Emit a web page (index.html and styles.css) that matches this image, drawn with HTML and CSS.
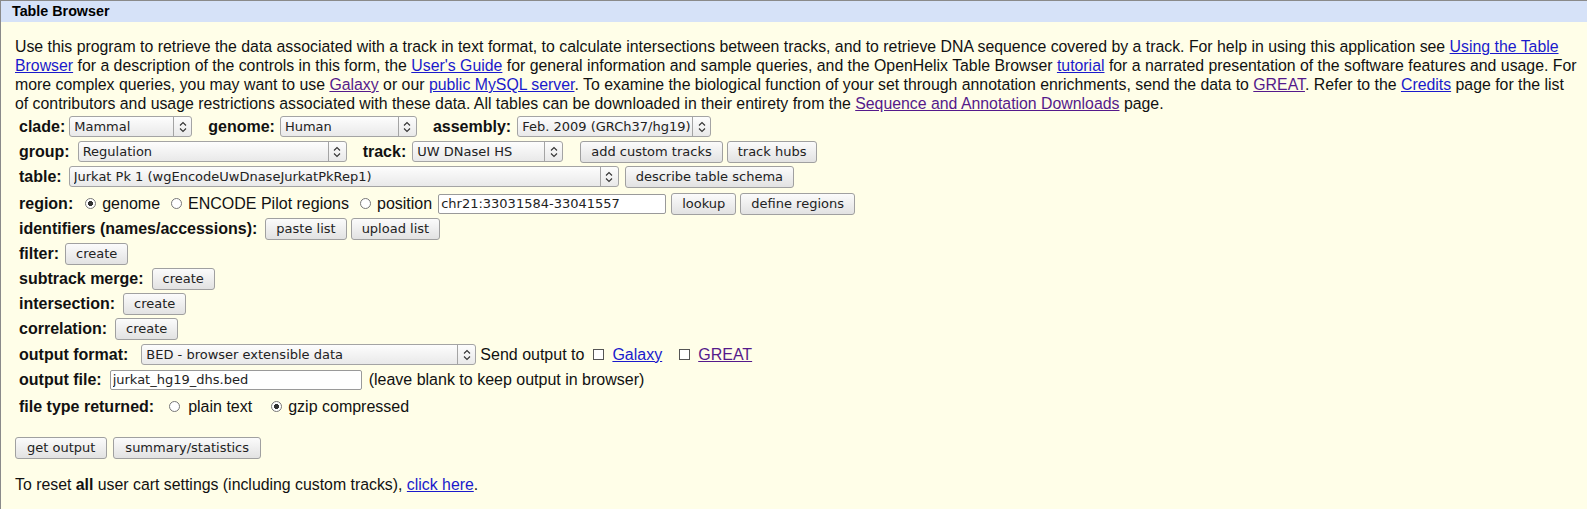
FILE: index.html
```html
<!DOCTYPE html>
<html>
<head>
<meta charset="utf-8">
<title>Table Browser</title>
<link rel="stylesheet" href="styles.css">
</head>
<body>
<div class="panel">
  <div class="title">Table Browser</div>
  <div class="content">
    <p class="intro">Use this program to retrieve the data associated with a track in text format, to calculate intersections between tracks, and to retrieve DNA sequence covered by a track. For help in using this application see <a href="#">Using the Table</a><br><a href="#">Browser</a> for a description of the controls in this form, the <a href="#">User's Guide</a> for general information and sample queries, and the OpenHelix Table Browser <a href="#">tutorial</a> for a narrated presentation of the software features and usage. For<br>more complex queries, you may want to use <a class="v" href="#">Galaxy</a> or our <a href="#">public MySQL server</a>. To examine the biological function of your set through annotation enrichments, send the data to <a class="v" href="#">GREAT</a>. Refer to the <a href="#">Credits</a> page for the list<br>of contributors and usage restrictions associated with these data. All tables can be downloaded in their entirety from the <a class="v" href="#">Sequence and Annotation Downloads</a> page.</p>

    <div class="form">
      <div class="row r-clade">
        <b class="lbl l-clade">clade:</b>
        <span class="sel w-clade"><select><option>Mammal</option></select><span class="arr"><svg width="8" height="12" viewBox="0 0 8 12"><path d="M1 4.5 L4 1.5 L7 4.5 M1 7.5 L4 10.5 L7 7.5" fill="none" stroke="#333" stroke-width="1.1"/></svg></span></span>
        <b class="lbl gap l-genome">genome:</b>
        <span class="sel w-genome"><select><option>Human</option></select><span class="arr"><svg width="8" height="12" viewBox="0 0 8 12"><path d="M1 4.5 L4 1.5 L7 4.5 M1 7.5 L4 10.5 L7 7.5" fill="none" stroke="#333" stroke-width="1.1"/></svg></span></span>
        <b class="lbl gap l-asm">assembly:</b>
        <span class="sel w-asm"><select><option>Feb. 2009 (GRCh37/hg19)</option></select><span class="arr"><svg width="8" height="12" viewBox="0 0 8 12"><path d="M1 4.5 L4 1.5 L7 4.5 M1 7.5 L4 10.5 L7 7.5" fill="none" stroke="#333" stroke-width="1.1"/></svg></span></span>
      </div>

      <div class="row r-group">
        <b class="lbl">group:</b>
        <span class="sel w-group"><select><option>Regulation</option></select><span class="arr"><svg width="8" height="12" viewBox="0 0 8 12"><path d="M1 4.5 L4 1.5 L7 4.5 M1 7.5 L4 10.5 L7 7.5" fill="none" stroke="#333" stroke-width="1.1"/></svg></span></span>
        <b class="lbl gap l-track">track:</b>
        <span class="sel w-track"><select><option>UW DNaseI HS</option></select><span class="arr"><svg width="8" height="12" viewBox="0 0 8 12"><path d="M1 4.5 L4 1.5 L7 4.5 M1 7.5 L4 10.5 L7 7.5" fill="none" stroke="#333" stroke-width="1.1"/></svg></span></span>
        <button class="btn after-track">add custom tracks</button>
        <button class="btn">track hubs</button>
      </div>

      <div class="row r-table">
        <b class="lbl l-table">table:</b>
        <span class="sel w-table"><select><option>Jurkat Pk 1 (wgEncodeUwDnaseJurkatPkRep1)</option></select><span class="arr"><svg width="8" height="12" viewBox="0 0 8 12"><path d="M1 4.5 L4 1.5 L7 4.5 M1 7.5 L4 10.5 L7 7.5" fill="none" stroke="#333" stroke-width="1.1"/></svg></span></span>
        <button class="btn">describe table schema</button>
      </div>

      <div class="row r-region">
        <b class="lbl l-region">region:</b>
        <label class="opt"><input type="radio" name="rg" checked>genome</label>
        <label class="opt"><input type="radio" name="rg">ENCODE Pilot regions</label>
        <label class="opt"><input type="radio" name="rg">position</label>
        <input class="txt w-pos" type="text" value="chr21:33031584-33041557">
        <button class="btn">lookup</button>
        <button class="btn">define regions</button>
      </div>

      <div class="row r-ids">
        <b class="lbl">identifiers (names/accessions):</b>
        <button class="btn">paste list</button>
        <button class="btn">upload list</button>
      </div>

      <div class="row r-filter">
        <b class="lbl l-filter">filter:</b>
        <button class="btn">create</button>
      </div>

      <div class="row r-sub">
        <b class="lbl">subtrack merge:</b>
        <button class="btn">create</button>
      </div>

      <div class="row r-int">
        <b class="lbl">intersection:</b>
        <button class="btn">create</button>
      </div>

      <div class="row r-corr">
        <b class="lbl">correlation:</b>
        <button class="btn">create</button>
      </div>

      <div class="row r-fmt">
        <b class="lbl l-fmt">output format:</b>
        <span class="sel w-fmt"><select><option>BED - browser extensible data</option></select><span class="arr"><svg width="8" height="12" viewBox="0 0 8 12"><path d="M1 4.5 L4 1.5 L7 4.5 M1 7.5 L4 10.5 L7 7.5" fill="none" stroke="#333" stroke-width="1.1"/></svg></span></span>
        <span class="plain">Send output to</span>
        <label class="chk"><input type="checkbox"><a href="#">Galaxy</a></label>
        <label class="chk chk2"><input type="checkbox"><a class="v" href="#">GREAT</a></label>
      </div>

      <div class="row r-file">
        <b class="lbl">output file:</b>
        <input class="txt w-file" type="text" value="jurkat_hg19_dhs.bed">
        <span class="plain note">(leave blank to keep output in browser)</span>
      </div>

      <div class="row r-type">
        <b class="lbl l-type">file type returned:</b>
        <label class="opt"><input type="radio" name="ft">plain text</label>
        <label class="opt gz"><input type="radio" name="ft" checked>gzip compressed</label>
      </div>
    </div>

    <div class="actions">
      <button class="btn big">get output</button>
      <button class="btn big">summary/statistics</button>
    </div>

    <p class="reset">To reset <b>all</b> user cart settings (including custom tracks), <a href="#">click here</a>.</p>
  </div>
</div>
</body>
</html>
```
FILE: styles.css
```css
html, body {
  margin: 0;
  padding: 0;
  background: #fffee8;
}
body {
  font-family: "Liberation Sans", Arial, sans-serif;
  color: #111;
}
.panel {
  border-top: 1px solid #8a8a8a;
  border-left: 1px solid #8a8a8a;
  background: #fffee8;
  min-height: 508px;
}
.title {
  background: #d6e2f8;
  height: 21px;
  line-height: 21px;
  padding-left: 11px;
  font-weight: bold;
  font-size: 14.3px;
  color: #000;
}
.content {
  padding: 15px 0 0 14px;
}
.intro {
  margin: 0;
  font-size: 15.85px;
  line-height: 19px;
  white-space: nowrap;
}
a { color: #1a1acc; }
a.v { color: #551a8b; }

.form {
  padding-left: 4px;
  margin-top: 1px;
}
.row {
  display: flex;
  align-items: center;
  height: 25px;
  font-size: 16px;
}
.r-region { margin-top: 2px; }
.r-fmt { margin-top: 1px; }
.r-type { margin-top: 2px; }

.lbl {
  font-weight: bold;
  font-size: 16px;
  margin-right: 8px;
  white-space: nowrap;
}
.lbl.l-clade { margin-right: 4px; }
.lbl.gap { margin-left: 10px; }
.lbl.l-genome { margin-right: 5px; }
.lbl.l-asm { margin-right: 6px; }
.lbl.l-track { margin-right: 6px; }
.lbl.l-table { margin-right: 7px; }
.lbl.l-region { margin-right: 6px; }
.lbl.l-filter { margin-right: 6px; }
.lbl.l-fmt { margin-right: 13px; }
.lbl.l-type { margin-right: 9px; }

.sel {
  display: inline-flex;
  align-items: stretch;
  height: 19px;
  border: 1px solid #a4a4a4;
  border-radius: 3px;
  background: linear-gradient(#fdfdfd, #e9e9e9);
  box-sizing: content-box;
  margin-right: 6px;
}
.sel select {
  appearance: none;
  -webkit-appearance: none;
  border: none;
  background: transparent;
  font-family: "DejaVu Sans", sans-serif;
  font-size: 13px;
  color: #222;
  padding: 0 0 0 4px;
  margin: 0;
  flex: 1;
  min-width: 0;
  height: 19px;
  outline: none;
  text-overflow: clip;
}
.sel .arr {
  width: 17px;
  flex: none;
  border-left: 1px solid #a4a4a4;
  display: flex;
  align-items: center;
  justify-content: center;
}
.w-clade { width: 121px; }
.w-genome { width: 135px; }
.w-asm { width: 192px; }
.w-group { width: 267px; }
.w-track { width: 149px; }
.w-table { width: 548px; }
.w-fmt { width: 333px; }

.btn {
  height: 22px;
  border: 1px solid #a0a0a0;
  border-radius: 3px;
  background: linear-gradient(#fbfbfb, #e2e2e2);
  font-family: "DejaVu Sans", sans-serif;
  font-size: 13px;
  color: #222;
  padding: 0 10px;
  margin: 0 4px 0 0;
  line-height: 20px;
}
.btn.after-track { margin-left: 11px; }
.btn.big { padding: 0 11px; margin-right: 6px; }

.txt {
  height: 18px;
  border: 1px solid #9a9a9a;
  border-radius: 2px;
  background: #fff;
  font-family: "DejaVu Sans", sans-serif;
  font-size: 13px;
  color: #222;
  padding: 0 2px;
  margin: 0 5px 0 0;
  box-sizing: content-box;
}
.w-pos { width: 222px; margin-left: 4px; }
.w-file { width: 246px; }

.opt {
  display: inline-flex;
  align-items: center;
  font-size: 16px;
  margin-right: 2px;
  white-space: nowrap;
}
.opt input[type=radio] {
  appearance: none;
  -webkit-appearance: none;
  width: 11px;
  height: 11px;
  border: 1px solid #777;
  border-radius: 50%;
  background: #fff;
  margin: 0 6px 0 9px;
  flex: none;
}
.opt input[type=radio]:checked {
  background: radial-gradient(circle, #333 0 2.3px, #fff 2.8px);
}
.r-region .opt:first-of-type input[type=radio],
.r-type .opt:first-of-type input[type=radio] { margin-left: 6px; }
.r-type .opt:first-of-type input[type=radio] { margin-right: 8px; }
.opt.gz { margin-left: 8px; }

.chk {
  display: inline-flex;
  align-items: center;
  font-size: 16px;
  white-space: nowrap;
}
.chk input[type=checkbox] {
  appearance: none;
  -webkit-appearance: none;
  width: 11px;
  height: 11px;
  border: 1px solid #555;
  background: #fff;
  margin: 0 8px 0 9px;
  flex: none;
}
.chk2 { margin-left: 8px; }

.plain { font-size: 16px; white-space: nowrap; }
.r-fmt .plain { margin-left: -2px; }
.note { margin-left: 2px; }

.actions {
  display: flex;
  margin-top: 18px;
}
.reset {
  margin: 17px 0 0 0;
  font-size: 15.85px;
}
```
